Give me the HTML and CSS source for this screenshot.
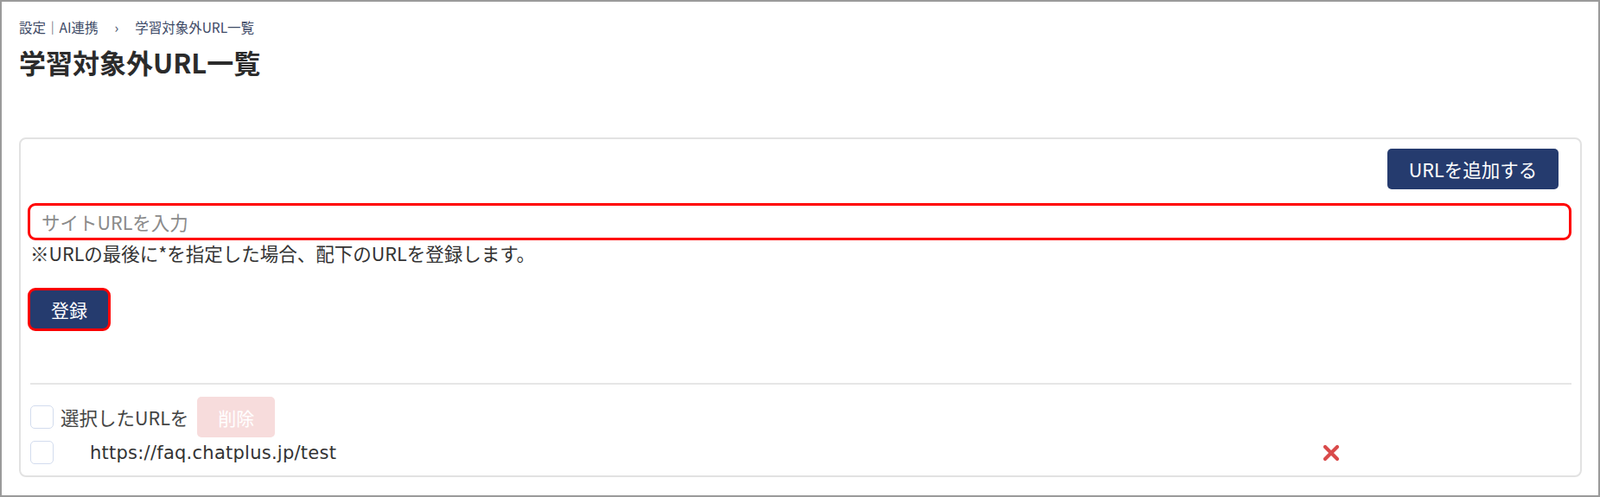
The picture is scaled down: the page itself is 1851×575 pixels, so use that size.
FILE: index.html
```html
<!DOCTYPE html>
<html lang="ja">
<head>
    <meta charset="UTF-8">
    <meta name="viewport" content="width=device-width, initial-scale=1.0">
    <title>学習対象外URL一覧</title>
    <link rel="stylesheet" href="styles.css">
</head>
<body>
    <div class="frame">
        <div class="breadcrumb">
            <span>設定｜AI連携</span>
            <span class="sep">›</span>
            <span>学習対象外URL一覧</span>
        </div>
        <h1 class="page-title">学習対象外URL一覧</h1>

        <div class="card">
            <div class="card-head">
                <button class="btn btn-navy btn-add">URLを追加する</button>
            </div>

            <!-- 入力フォーム -->
            <div class="url-form">
                <input type="text" class="url-input" placeholder="サイトURLを入力">
                <p class="note">※URLの最後に*を指定した場合、配下のURLを登録します。</p>
                <button class="btn btn-navy btn-submit">登録</button>
            </div>

            <div class="url-list">
                <div class="bulk-row">
                    <span class="check"></span>
                    <span class="bulk-label">選択したURLを</span>
                    <button class="btn btn-delete" disabled>削除</button>
                </div>
                <div class="url-row">
                    <span class="check"></span>
                    <span class="url-text">https://faq.chatplus.jp/test</span>
                    <span class="remove">
                        <svg width="20" height="20" viewBox="0 0 20 20">
                            <path d="M3 3 L17 17 M17 3 L3 17" stroke="#d94a4a" stroke-width="4.2" stroke-linecap="round"/>
                        </svg>
                    </span>
                </div>
            </div>
        </div>
    </div>
</body>
</html>
```

FILE: styles.css
```css
* {
    box-sizing: border-box;
}
body {
    margin: 0;
    font-family: "Noto Sans CJK JP", "Noto Sans", sans-serif;
    color: #333;
    background-color: #fff;
}
.frame {
    height: 575px;
    border: 2px solid #9a9a9a;
    padding: 18px 19px 0 20px;
}
.breadcrumb {
    font-size: 15.5px;
    line-height: 22px;
    color: #3d4a66;
    display: flex;
    gap: 19px;
}
.page-title {
    margin: 11px 0 0;
    font-size: 31px;
    line-height: 38px;
    font-weight: bold;
    color: #2b2b2b;
}
.card {
    margin-top: 68px;
    height: 393px;
    border: 2px solid #e2e2e2;
    border-radius: 8px;
    padding: 11px 10px 0 8px;
}
.card-head {
    display: flex;
    justify-content: flex-end;
    padding-right: 15px;
}
.btn {
    border: none;
    border-radius: 5px;
    font-family: inherit;
    color: #fff;
    cursor: pointer;
}
.btn-navy {
    background-color: #253b6e;
}
.btn-add {
    width: 198px;
    height: 47px;
    font-size: 21.5px;
}
.url-form {
    margin-top: 16px;
}
.url-input {
    display: block;
    width: 100%;
    height: 43px;
    border: 3px solid #ff0000;
    border-radius: 9px;
    padding: 0 13px;
    font-size: 21.5px;
    font-family: inherit;
    outline: none;
}
.url-input::placeholder {
    color: #8a8a8a;
}
.note {
    margin: 2px 0 0 3px;
    font-size: 21.5px;
    line-height: 26px;
    color: #333;
}
.btn-submit {
    display: block;
    margin-top: 27px;
    width: 96px;
    height: 50px;
    font-size: 21px;
    border: 3px solid #ff0000;
    border-radius: 9px;
}
.url-list {
    margin: 60px 0 0 3px;
    border-top: 2px solid #e6e6e6;
    padding-top: 14px;
}
.bulk-row {
    display: flex;
    align-items: center;
}
.check {
    width: 27px;
    height: 27px;
    border: 1.5px solid #d3dcee;
    border-radius: 5px;
    background-color: #fff;
}
.bulk-label {
    margin-left: 8px;
    font-size: 21.5px;
    color: #444;
}
.btn-delete {
    margin-left: 10px;
    width: 90px;
    height: 47px;
    font-size: 21px;
    background-color: #f7dcdc;
    color: #fff;
    cursor: default;
}
.url-row {
    display: grid;
    grid-template-columns: 27px 1468px 20px;
    align-items: center;
    margin-top: 4px;
}
.url-text {
    padding-left: 42px;
    font-family: "DejaVu Sans", "Noto Sans", sans-serif;
    font-size: 21px;
    letter-spacing: 0.25px;
    color: #333;
}
.remove {
    display: flex;
}
```
